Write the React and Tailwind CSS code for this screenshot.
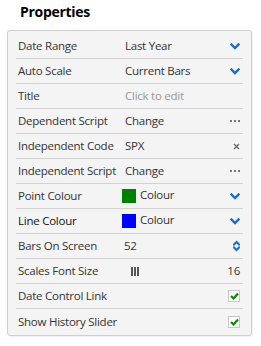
import React from "react";

function Chevron() {
  return (
    <svg width="10" height="7" viewBox="0 0 10 7" className="block">
      <polyline points="1.5,1.5 5,5 8.5,1.5" fill="none" stroke="#1a6fc4" strokeWidth="2.4" strokeLinecap="square" />
    </svg>
  );
}

function Spinner() {
  return (
    <svg width="7" height="12" viewBox="0 0 7 12" className="block">
      <polyline points="1,4.5 3.5,2 6,4.5" fill="none" stroke="#1a6fc4" strokeWidth="2" strokeLinecap="square" />
      <polyline points="1,7.5 3.5,10 6,7.5" fill="none" stroke="#1a6fc4" strokeWidth="2" strokeLinecap="square" />
    </svg>
  );
}

function Dots() {
  return (
    <div className="flex gap-[2px]">
      <span className="w-[2px] h-[2px] bg-[#777]" />
      <span className="w-[2px] h-[2px] bg-[#777]" />
      <span className="w-[2px] h-[2px] bg-[#777]" />
    </div>
  );
}

function Cross() {
  return (
    <svg width="7" height="7" viewBox="0 0 7 7" className="block">
      <path d="M1 1 L6 6 M6 1 L1 6" stroke="#666" strokeWidth="1.3" />
    </svg>
  );
}

function Check() {
  return (
    <div className="w-[12px] h-[12px] border border-[#c8c8c8] bg-white flex items-center justify-center">
      <svg width="9" height="8" viewBox="0 0 9 8" className="block">
        <polyline points="1,4 3.5,6.5 8,1.5" fill="none" stroke="#0a8a0a" strokeWidth="2.2" />
      </svg>
    </div>
  );
}

function Swatch({ color }) {
  return <span className="w-[14px] h-[14px] -ml-[3px] mr-[4px]" style={{ background: color }} />;
}

const rows = [
  { label: "Date Range", value: "Last Year", icon: <Chevron /> },
  { label: "Auto Scale", value: "Current Bars", icon: <Chevron /> },
  { label: "Title", value: <span className="text-[#999]">Click to edit</span> },
  { label: "Dependent Script", value: "Change", icon: <Dots /> },
  { label: "Independent Code", value: "SPX", icon: <Cross /> },
  { label: "Independent Script", value: "Change", icon: <Dots /> },
  {
    label: "Point Colour",
    value: (
      <span className="flex items-center">
        <Swatch color="#008000" />
        <span className="mb-[2px]">Colour</span>
      </span>
    ),
    icon: <Chevron />,
  },
  {
    label: "Line Colour",
    dark: true,
    value: (
      <span className="flex items-center">
        <Swatch color="#0000ff" />
        <span className="mb-[2px]">Colour</span>
      </span>
    ),
    icon: <Chevron />,
  },
  { label: "Bars On Screen", value: <span className="-ml-[1px]">52</span>, icon: <Spinner /> },
  {
    label: "Scales Font Size",
    value: (
      <span className="flex gap-[1px] ml-[6px]">
        <span className="w-[2px] h-[9px] bg-[#555]" />
        <span className="w-[2px] h-[9px] bg-[#555]" />
        <span className="w-[2px] h-[9px] bg-[#555]" />
      </span>
    ),
    icon: <span className="text-[#333]">16</span>,
  },
  { label: "Date Control Link", value: "", icon: <Check /> },
  { label: "Show History Slider", value: "", icon: <Check /> },
];

export default function App() {
  return (
    <div className="w-[261px] h-[346px] bg-white" style={{ fontFamily: '"Open Sans", "Liberation Sans", sans-serif' }}>
      <div className="pl-[20px] pt-[2px] text-[14px] leading-[20px] font-bold text-black tracking-[-0.3px]">Properties</div>
      <div className="mt-[8px] ml-[7px] w-[245px] border border-[#cfcfcf] rounded-[3px] bg-[#f4f4f4] px-[8px] pt-[3px] pb-[1px] shadow-[1px_1px_1px_rgba(0,0,0,0.06)]">
        {rows.map((row, i) => (
          <div
            key={row.label}
            className={
              "flex items-center h-[25px] pl-[2px] pr-[3px] text-[11.5px] tracking-[-0.25px] " +
              (i < rows.length - 1 ? "border-b border-[#d2d2d2]" : "h-[24px]")
            }
          >
            <span className={"w-[107px] shrink-0 whitespace-nowrap " + (row.dark ? "text-[#111]" : "text-[#333]")}>
              {row.label}
            </span>
            <span className="flex-1 flex items-center text-[#333] whitespace-nowrap">{row.value}</span>
            {row.icon && <span className="flex items-center">{row.icon}</span>}
          </div>
        ))}
      </div>
    </div>
  );
}
